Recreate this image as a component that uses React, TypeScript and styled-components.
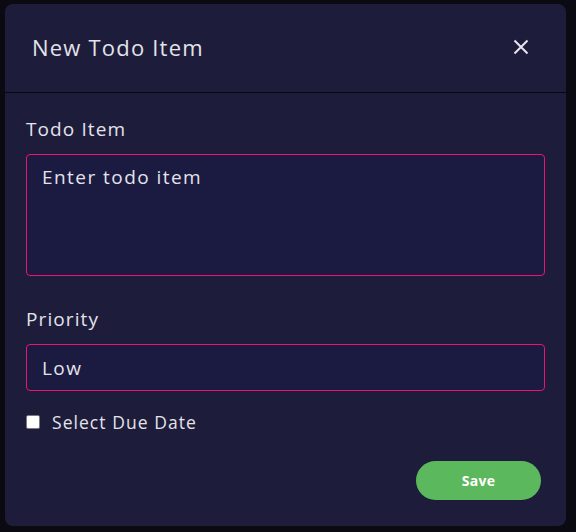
import React from "react";
import styled, { createGlobalStyle } from "styled-components";

const Global = createGlobalStyle`
  html, body { margin: 0; padding: 0; background: #0b0a12; }
  body { width: 576px; height: 532px; overflow: hidden; font-family: "Open Sans", "DejaVu Sans", sans-serif; }
  * { box-sizing: border-box; }
`;

const Page = styled.div`
  padding: 4px 10px 6px 5px;
  height: 532px;
`;

const Modal = styled.div`
  background: #1e1c3b;
  border-radius: 8px;
  height: 522px;
  display: flex;
  flex-direction: column;
`;

const Header = styled.div`
  height: 89px;
  padding: 0 36px 2px 27px;
  display: flex;
  align-items: center;
  justify-content: space-between;
  border-bottom: 1px solid #08070e;
`;

const Title = styled.h2`
  margin: 0;
  font-size: 22px;
  font-weight: 500;
  letter-spacing: 1.2px;
  color: #e3e3ea;
`;

const Close = styled.button`
  background: none;
  border: none;
  padding: 0;
  width: 18px;
  height: 18px;
  display: flex;
  align-items: center;
  justify-content: center;
  cursor: pointer;
`;

const Body = styled.div`
  padding: 24px 21px 0 21px;
  display: flex;
  flex-direction: column;
`;

const Label = styled.label`
  font-size: 19px;
  letter-spacing: 1.1px;
  color: #e3e3ea;
  line-height: 24px;
  margin-bottom: 13px;
`;

const Field = styled.div<{ $h: number; $tall?: boolean }>`
  height: ${(p) => p.$h}px;
  border: 1px solid #ec1470;
  border-radius: 4px;
  background: #1b1a40;
  padding: ${(p) => (p.$tall ? "9px 15px" : "0 15px")};
  display: flex;
  align-items: ${(p) => (p.$tall ? "flex-start" : "center")};
  font-size: 19px;
  letter-spacing: 1.45px;
  color: #e3e3ea;
  margin-bottom: ${(p) => (p.$tall ? 31 : 19)}px;
`;

const CheckRow = styled.div`
  display: flex;
  align-items: center;
  gap: 12px;
  font-size: 17.5px;
  letter-spacing: 1.05px;
  color: #e3e3ea;
`;

const Box = styled.span`
  width: 14px;
  height: 14px;
  background: #fff;
  border: 1px solid #7a7a7a;
  border-radius: 2px;
`;

const Footer = styled.div`
  display: flex;
  justify-content: flex-end;
  padding: 27px 4px 0 0;
`;

const Save = styled.button`
  width: 125px;
  height: 39px;
  border-radius: 20px;
  border: none;
  background: #5cb85c;
  color: #fff;
  font-family: inherit;
  font-weight: 700;
  font-size: 14px;
  letter-spacing: 0.3px;
  cursor: pointer;
`;

export default function App() {
  return (
    <>
      <Global />
      <Page>
        <Modal>
          <Header>
            <Title>New Todo Item</Title>
            <Close aria-label="close">
              <svg width="16" height="16" viewBox="0 0 16 16">
                <path d="M1.5 1.5 L14.5 14.5 M14.5 1.5 L1.5 14.5" stroke="#e6e6ec" strokeWidth="2" />
              </svg>
            </Close>
          </Header>
          <Body>
            <Label>Todo Item</Label>
            <Field $h={122} $tall>Enter todo item</Field>
            <Label>Priority</Label>
            <Field $h={47}>Low</Field>
            <CheckRow>
              <Box />
              Select Due Date
            </CheckRow>
            <Footer>
              <Save>Save</Save>
            </Footer>
          </Body>
        </Modal>
      </Page>
    </>
  );
}
